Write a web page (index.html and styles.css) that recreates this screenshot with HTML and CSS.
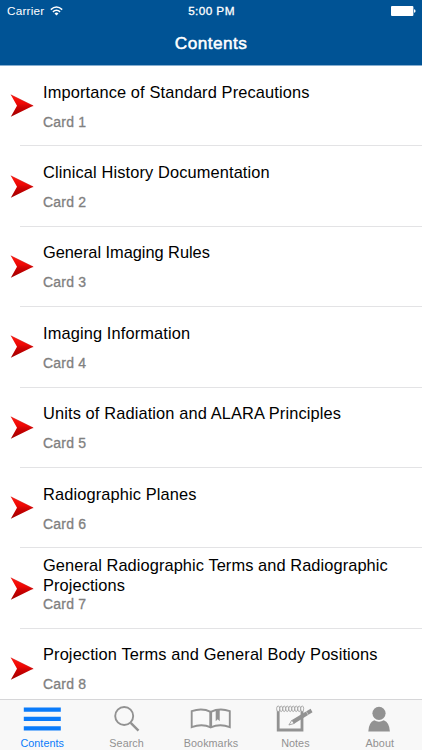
FILE: index.html
```html
<!DOCTYPE html>
<html lang="en">
<head>
<meta charset="utf-8">
<title>Contents</title>
<link rel="stylesheet" href="styles.css">
</head>
<body>
<svg class="defs" width="0" height="0" aria-hidden="true">
  <defs>
    <linearGradient id="red" x1="0" y1="0" x2="0" y2="1">
      <stop offset="0" stop-color="#ff1a10"/>
      <stop offset=".4" stop-color="#ee0704"/>
      <stop offset=".6" stop-color="#c90000"/>
      <stop offset="1" stop-color="#a00000"/>
    </linearGradient>
    <symbol id="arrow" viewBox="0 0 24 24">
      <path d="M.8 .8 23.2 11.8 .8 22.8 7 11.8Z" fill="url(#red)"/>
      <path d="M.8 .8 23.2 11.8H7" fill="none" stroke="#c81010" stroke-width=".5"/>
    </symbol>
  </defs>
</svg>
<div class="app">
  <header class="header">
    <div class="status">
      <div class="carrier"><span>Carrier</span>
        <svg width="13" height="10" viewBox="0 0 13 10"><g fill="none" stroke="#fff" stroke-width="1.5"><path d="M.8 3.6Q6.5-1.6 12.2 3.6"/><path d="M2.9 5.9Q6.5 2.6 10.1 5.9"/></g><path d="M4.5 7.4Q6.5 5.8 8.5 7.4L6.5 9.5Z" fill="#fff"/></svg>
      </div>
      <div class="time">5:00 PM</div>
      <div class="battery"><svg width="25" height="10" viewBox="0 0 25 10"><rect width="22.4" height="10" rx="1" fill="#fff"/><path d="M23 3.2Q24.6 3.5 24.6 5T23 6.8Z" fill="#fff"/></svg></div>
    </div>
    <h1 class="title">Contents</h1>
  </header>
  <main class="list">
    <div class="row"><svg class="arrow"><use href="#arrow"/></svg><div class="text"><div class="name">Importance of Standard Precautions</div><div class="card">Card 1</div></div></div>
    <div class="row"><svg class="arrow"><use href="#arrow"/></svg><div class="text"><div class="name">Clinical History Documentation</div><div class="card">Card 2</div></div></div>
    <div class="row"><svg class="arrow"><use href="#arrow"/></svg><div class="text"><div class="name tight">General Imaging Rules</div><div class="card">Card 3</div></div></div>
    <div class="row"><svg class="arrow"><use href="#arrow"/></svg><div class="text"><div class="name">Imaging Information</div><div class="card">Card 4</div></div></div>
    <div class="row"><svg class="arrow"><use href="#arrow"/></svg><div class="text"><div class="name">Units of Radiation and ALARA Principles</div><div class="card">Card 5</div></div></div>
    <div class="row"><svg class="arrow"><use href="#arrow"/></svg><div class="text"><div class="name">Radiographic Planes</div><div class="card">Card 6</div></div></div>
    <div class="row two-line"><svg class="arrow"><use href="#arrow"/></svg><div class="text"><div class="name">General Radiographic Terms and Radiographic<br>Projections</div><div class="card">Card 7</div></div></div>
    <div class="row"><svg class="arrow"><use href="#arrow"/></svg><div class="text"><div class="name">Projection Terms and General Body Positions</div><div class="card">Card 8</div></div></div>
  </main>
  <nav class="tabs">
    <div class="tab active"><svg width="42" height="30" viewBox="0 0 42 30"><path d="M2.8 7.4h37v4.4h-37zM2.8 16.8h37v4.3h-37zM2.8 26.2h37v4.3h-37z" fill="#0a7bfa"/></svg><span>Contents</span></div>
    <div class="tab"><svg width="42" height="30" viewBox="0 0 42 30"><g fill="none" stroke="#929292"><circle cx="18.2" cy="16" r="9" stroke-width="1.9"/><path d="M24.7 22.8 32.5 30.6" stroke-width="2.4"/></g></svg><span>Search</span></div>
    <div class="tab"><svg width="42" height="30" viewBox="0 0 42 30"><g fill="none" stroke="#929292" stroke-width="1.9"><path d="M20.7 11.8Q12 7.6 1.7 11.2V27.2Q12 23.2 20.7 27.4Q30 23.2 39.8 27.2V11.2Q30 7.6 20.7 11.8Z"/><path d="M20.7 11V28" stroke-width="2.8"/></g><path d="M25.7 9.8h4v11.4l-2-2-2 2Z" fill="#929292"/></svg><span>Bookmarks</span></div>
    <div class="tab"><svg width="42" height="30" viewBox="0 0 42 30"><path d="M4.2 10.5V30H28V11" fill="none" stroke="#929292" stroke-width="2.8"/><g fill="#f8f8f8" stroke="#999" stroke-width=".8"><ellipse cx="4.2" cy="8.8" rx="1.6" ry="2.8"/><ellipse cx="7.2" cy="8.8" rx="1.4" ry="2.8"/><ellipse cx="10.2" cy="8.8" rx="1.4" ry="2.8"/><ellipse cx="13.2" cy="8.8" rx="1.4" ry="2.8"/><ellipse cx="16.2" cy="8.8" rx="1.4" ry="2.8"/><ellipse cx="19.2" cy="8.8" rx="1.4" ry="2.8"/><ellipse cx="22.2" cy="8.8" rx="1.4" ry="2.8"/><ellipse cx="25.2" cy="8.8" rx="1.4" ry="2.8"/><ellipse cx="28.2" cy="8.8" rx="1.5" ry="2.8"/></g><path d="M14.9 25 17.9 20.1 20.1 23.5Z" fill="#f8f8f8" stroke="#929292" stroke-width=".8"/><path d="M17.9 19.9 36.6 8.8 38.5 12.3 20.1 23.8Z" fill="#929292"/><path d="M32.2 11.4 34.3 15" stroke="#f8f8f8" stroke-width=".5"/></svg><span>Notes</span></div>
    <div class="tab"><svg width="42" height="30" viewBox="0 0 42 30"><g fill="#929292"><circle cx="20" cy="13.3" r="6.6"/><path d="M9.3 31.5Q9.7 22.6 15.2 20.3Q20 23 24.8 20.3Q30.5 22.6 30.9 31.5Z"/></g></svg><span>About</span></div>
  </nav>
</div>
</body>
</html>
```
FILE: styles.css
```css
* { box-sizing: border-box; }
body { margin: 0; background: #fff; font-family: "Liberation Sans", Arial, sans-serif; }
.defs { display: block; }
.app { width: 422px; height: 750px; display: flex; flex-direction: column; overflow: hidden; }
.header { flex: none; height: 66px; background: #005395; color: #fff; border-bottom: 1px solid #86aed0; }
.status { height: 22px; padding: 0 6px 0 7px; display: grid; grid-template-columns: 1fr auto 1fr; align-items: center; font-size: 11.8px; letter-spacing: .2px; }
.carrier { display: flex; align-items: center; gap: 6px; }
.carrier svg, .battery svg { display: block; }
.time { letter-spacing: .4px; -webkit-text-stroke: .3px #fff; }
.battery { display: flex; justify-content: flex-end; }
.title { margin: 11px 0 0; text-align: center; font-size: 17.2px; line-height: 20px; font-weight: 400; letter-spacing: .45px; -webkit-text-stroke: .5px #fff; }
.list { flex: 1; min-height: 0; overflow: hidden; }
.row { height: 80.4px; padding-left: 10px; display: flex; align-items: center; background: linear-gradient(#e3e3e5, #e3e3e5) 20px 100% / 100% 1px no-repeat; }
.arrow { width: 24px; height: 24px; margin-right: 9px; flex: none; }
.text { white-space: nowrap; }
.name { font-size: 16.4px; line-height: 20px; letter-spacing: .12px; color: #000; }
.name.tight { letter-spacing: -.04px; }
.card { margin-top: 11px; font-size: 14px; line-height: 18px; letter-spacing: .2px; color: #808080; -webkit-text-stroke: .3px #808080; }
.two-line .text { padding-bottom: 8px; }
.two-line .name { line-height: 19.5px; letter-spacing: .08px; }
.two-line .card { margin-top: 0; }
.tabs { flex: none; height: 51px; display: grid; grid-template-columns: repeat(5, 1fr); background: #f8f8f8; border-top: 1px solid #d6d6d8; }
.tab { display: flex; flex-direction: column; align-items: center; color: #929292; font-size: 10.8px; line-height: 13px; letter-spacing: .05px; }
.tab svg { display: block; overflow: visible; margin-bottom: 7px; }
.tab.active { color: #0a7bfa; }
```
